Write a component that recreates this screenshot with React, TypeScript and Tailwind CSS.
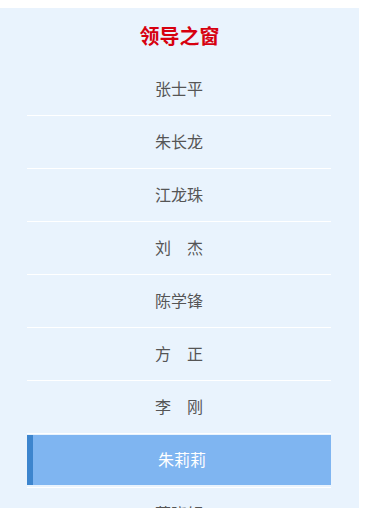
const leaders = [
  { name: "张士平" },
  { name: "朱长龙" },
  { name: "江龙珠" },
  { name: "刘　杰" },
  { name: "陈学锋" },
  { name: "方　正" },
  { name: "李　刚" },
  { name: "朱莉莉", active: true },
  { name: "蔡晓轩" },
];

export default function App() {
  return (
    <div className="h-[508px] overflow-hidden bg-white pt-2 font-['Noto_Sans_CJK_SC','Noto_Sans',sans-serif]">
      <div className="w-[359px] min-h-[600px] bg-[#e9f3fd]">
        {/* Title */}
        <h2 className="h-[55px] pt-[15px] text-center text-[20px] leading-[26px] font-bold text-[#d7000f]">
          领导之窗
        </h2>

        {/* List */}
        <ul className="ml-[27px] w-[304px]">
          {leaders.map((l) => (
            <li key={l.name} className="h-[53px] border-b border-white">
              <a
                href="#"
                className={
                  l.active
                    ? "flex h-[50px] mt-px pb-[2px] items-center justify-center border-l-[6px] border-[#3d85ce] bg-[#7fb5f1] text-[16px] text-white"
                    : "flex h-[52px] pb-[2px] items-center justify-center text-[16px] text-[#555]"
                }
              >
                {l.name}
              </a>
            </li>
          ))}
        </ul>
      </div>
    </div>
  );
}
